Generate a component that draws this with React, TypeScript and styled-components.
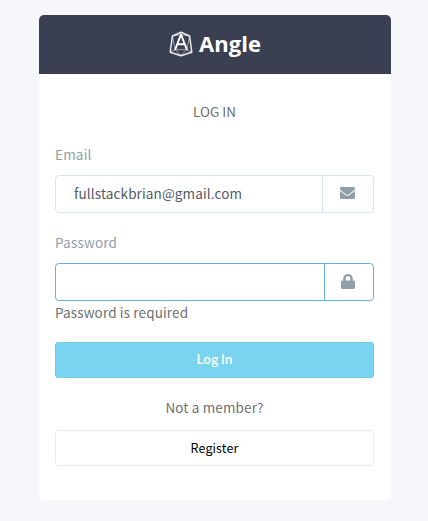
import React from 'react';
import styled, { createGlobalStyle } from 'styled-components';

const GlobalStyle = createGlobalStyle`
  * { box-sizing: border-box; }
  body {
    margin: 0;
    background: #f5f7fb;
    color: #707070;
    font-family: "Noto Sans CJK SC", "Open Sans", sans-serif;
    font-size: 13.5px;
  }
`;

const Page = styled.main`
  min-height: 521px;
  padding: 15px 37px 21px 39px;
`;

const Card = styled.section`
  height: 485px;
  background: #fff;
  border-radius: 5px;
  overflow: hidden;
`;

const Header = styled.header`
  display: flex;
  align-items: center;
  justify-content: center;
  gap: 6px;
  height: 59px;
  background: #3a3f51;
  border-bottom: 1px solid #373a4d;
`;

const Brand = styled.span`
  padding-bottom: 1px;
  color: #fff;
  font: 700 22px/29px "Open Sans", sans-serif;
`;

const Form = styled.form`
  display: flex;
  flex-direction: column;
  padding: 27px 17px 0 16px;
`;

const Title = styled.h1`
  margin: 0 0 22px;
  font-size: 13.5px;
  font-weight: 400;
  line-height: 21px;
  text-align: center;
`;

const Label = styled.label`
  height: 21px;
  margin-bottom: 10px;
  color: #909fa7;
  line-height: 21px;
  letter-spacing: 0.2px;
`;

const InputGroup = styled.div<{ $focused?: boolean }>`
  display: flex;
  height: 38px;
  border: 1px solid ${p => (p.$focused ? '#66afe9' : '#dbe6e8')};
  border-radius: 4px;
`;

const Input = styled.input`
  flex: 1;
  min-width: 0;
  padding: 0 18px 2px;
  border: 0;
  outline: 0;
  background: transparent;
  color: #515a66;
  font: inherit;
  letter-spacing: 0.13px;
`;

const Addon = styled.span<{ $focused?: boolean }>`
  display: flex;
  align-items: center;
  justify-content: center;
  width: ${p => (p.$focused ? 49 : 51)}px;
  padding-right: 2px;
  padding-bottom: ${p => (p.$focused ? 1 : 2)}px;
  border-left: 1px solid ${p => (p.$focused ? '#66afe9' : '#dbe6e8')};
  color: #909fa7;
`;

const EmailGroup = styled(InputGroup)`
  margin-bottom: 19px;
`;

const Message = styled.p`
  margin: 1px 0 19px;
  line-height: 21px;
  letter-spacing: 0.14px;
`;

const Button = styled.button<{ $primary?: boolean }>`
  height: 36px;
  padding: 0 0 ${p => (p.$primary ? 3 : 2)}px;
  border: 1px solid ${p => (p.$primary ? '#6fcbe8' : '#eaeaea')};
  border-radius: 3px;
  background: ${p => (p.$primary ? '#7ad4f0' : '#fff')};
  color: ${p => (p.$primary ? '#fff' : '#000')};
  font-family: inherit;
  font-size: 12.5px;
  font-weight: ${p => (p.$primary ? 500 : 400)};
  letter-spacing: ${p => (p.$primary ? 0 : 0.1)}px;
`;

const Prompt = styled.p`
  margin: 19px 0 12px;
  line-height: 21px;
  letter-spacing: 0.14px;
  text-align: center;
`;

const Logo = () => (
  <svg width="24" height="26" viewBox="0 0 24 26" fill="none" stroke="#fff" strokeLinejoin="round">
    <path d="M12 1.2 20.600 5 22.800 21.200 12 24.700 1.200 21.200 3.400 5Z" strokeWidth="1.5" opacity=".9" />
    <path d="M3.400 5 12 3.800 20.600 5M3.400 5 6.200 18.700 1.200 21.200M20.600 5 17.800 18.700 22.800 21.200M6.200 18.700 12 24.500 17.800 18.700M6.200 18.700H17.800" strokeWidth=".8" opacity=".65" />
    <path d="M6 19 12 3.500 18 19M8.300 13.300h7.400" strokeWidth="2" />
  </svg>
);

const Envelope = () => (
  <svg width="15" height="12" viewBox="0 0 512 384" preserveAspectRatio="none" fill="currentColor">
    <path d="M502.3 126.8c3.900-3.100 9.700-.2 9.700 4.700V336c0 26.500-21.500 48-48 48H48c-26.500 0-48-21.500-48-48V131.600c0-5 5.700-7.800 9.700-4.700 22.400 17.400 52.100 39.500 154.100 113.600 21.100 15.400 56.700 47.800 92.200 47.600 35.700.3 72-32.800 92.300-47.600 102-74.100 131.600-96.300 154-113.700zM256 256c23.200.4 56.600-29.200 73.400-41.400 132.700-96.300 142.800-104.700 173.400-128.700 5.800-4.500 9.200-11.500 9.200-18.900v-19c0-26.500-21.500-48-48-48H48C21.500 0 0 21.500 0 48v19c0 7.400 3.400 14.300 9.200 18.900 30.600 23.900 40.700 32.400 173.400 128.700 16.800 12.200 50.200 41.800 73.400 41.400z" />
  </svg>
);

const Lock = () => (
  <svg width="14" height="15" viewBox="0 0 448 512" preserveAspectRatio="none" fill="currentColor">
    <path d="M400 224h-24v-72C376 68.200 307.800 0 224 0S72 68.200 72 152v72H48c-26.500 0-48 21.500-48 48v192c0 26.500 21.500 48 48 48h352c26.500 0 48-21.500 48-48V272c0-26.500-21.500-48-48-48zm-104 0H152v-72c0-39.700 32.300-72 72-72s72 32.300 72 72v72z" />
  </svg>
);

export default function App() {
  return (
    <Page>
      <GlobalStyle />
      <Card>
        <Header>
          <Logo />
          <Brand>Angle</Brand>
        </Header>
        <Form onSubmit={e => e.preventDefault()}>
          <Title>LOG IN</Title>
          <Label htmlFor="email">Email</Label>
          <EmailGroup>
            <Input id="email" type="email" defaultValue="fullstackbrian@gmail.com" spellCheck={false} />
            <Addon><Envelope /></Addon>
          </EmailGroup>
          <Label htmlFor="password">Password</Label>
          <InputGroup $focused>
            <Input id="password" type="password" />
            <Addon $focused><Lock /></Addon>
          </InputGroup>
          <Message>Password is required</Message>
          <Button $primary type="submit">Log In</Button>
          <Prompt>Not a member?</Prompt>
          <Button type="button">Register</Button>
        </Form>
      </Card>
    </Page>
  );
}
